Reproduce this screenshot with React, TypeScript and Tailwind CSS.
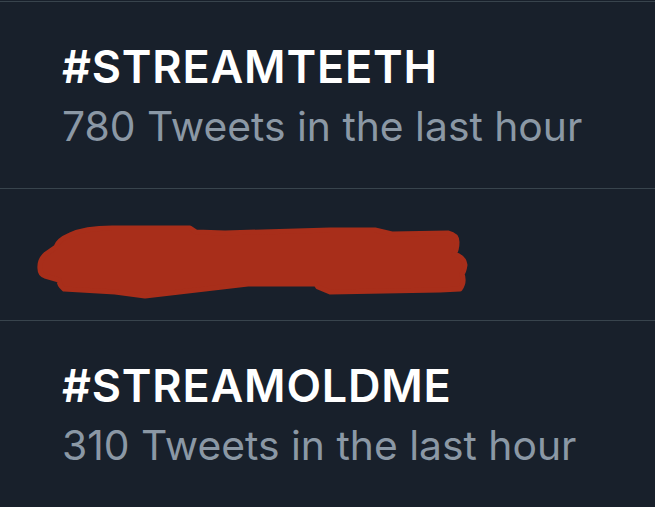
import React from 'react';

const trends = [
  { tag: '#STREAMTEETH', count: '780 Tweets in the last hour' },
  { tag: '#STREAMOLDME', count: '310 Tweets in the last hour' },
];

function Trend({ tag, count }: { tag: string; count: string }) {
  return (
    <div className="pl-[62px] pt-[37px] pb-[38px]">
      <div className="text-[45px] leading-[55px] font-semibold text-white tracking-[0.8px]">{tag}</div>
      <div className="mt-[9px] text-[40.8px] leading-[47px] text-[#8b98a5]">{count}</div>
    </div>
  );
}

function Scribble() {
  return (
    <svg width="655" height="131" viewBox="0 0 655 131" className="block">
      <path
        d="M40 80 Q39 71 46 65 L56 58 Q58 51 70 46 Q85 39 112 39 L190 39 L196 43 L225 44 L330 41 L375 41 L392 45 L448 44 Q457 46 457 53 Q457 61 454 65 Q464 68 465 76 Q464 83 462 85 Q465 93 460 100 L440 101 L330 103 L318 98 L316 95 L248 95 L145 107 L115 103 L64 100 Q59 96 59 91 L45 87 Q40 85 40 80 Z"
        fill="#a82e1a"
        stroke="#a82e1a"
        strokeWidth="5"
        strokeLinejoin="round"
      />
    </svg>
  );
}

export default function App() {
  return (
    <div className="h-[507px] w-[655px] overflow-hidden bg-[#18202b] pt-px" style={{ fontFamily: 'Inter, "Noto Sans", sans-serif' }}>
      <div className="border-t border-[#38444d]">
        <Trend {...trends[0]} />
      </div>
      <div className="border-t border-[#38444d]">
        <Scribble />
      </div>
      <div className="border-t border-[#38444d]">
        <Trend {...trends[1]} />
      </div>
    </div>
  );
}
